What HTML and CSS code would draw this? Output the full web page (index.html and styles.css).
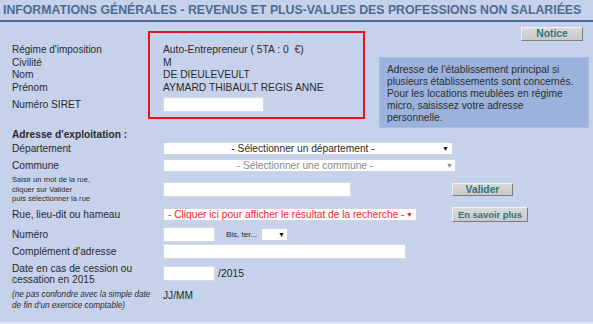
FILE: index.html
```html
<!DOCTYPE html>
<html lang="fr">
<head>
<meta charset="utf-8">
<title>Informations générales</title>
<link rel="stylesheet" href="styles.css">
</head>
<body>
<div class="page">
  <h1 class="title">INFORMATIONS GÉNÉRALES - REVENUS ET PLUS-VALUES DES PROFESSIONS NON SALARIÉES</h1>

  <div class="top">
    <div class="labels">
      <div class="line">Régime d'imposition</div>
      <div class="line">Civilité</div>
      <div class="line">Nom</div>
      <div class="line">Prénom</div>
      <div class="line siret-label">Numéro SIRET</div>
    </div>
    <div class="redbox">
      <div class="line">Auto-Entrepreneur ( 5TA : 0&nbsp; €)</div>
      <div class="line">M</div>
      <div class="line">DE DIEULEVEULT</div>
      <div class="line">AYMARD THIBAULT REGIS ANNE</div>
      <div class="input siret"></div>
    </div>
    <div class="side">
      <div class="btn notice">Notice</div>
      <div class="info">Adresse de l'établissement principal si<br>plusieurs établissements sont concernés.<br>Pour les locations meublées en régime<br>micro, saisissez votre adresse<br>personnelle.</div>
    </div>
  </div>

  <div class="form">
    <div class="heading">Adresse d'exploitation :</div>

    <div class="row r-dept">
      <div class="label">Département</div>
      <div class="select dept"><span class="sel-text">- Sélectionner un département -</span><span class="arrow">▼</span></div>
    </div>

    <div class="row r-commune">
      <div class="label">Commune</div>
      <div class="select commune"><span class="sel-text">- Sélectionner une commune -</span><span class="arrow">▼</span></div>
    </div>

    <div class="row r-saisir">
      <div class="label small">Saisir un mot de la rue,<br>cliquer sur Valider<br>puis sélectionner la rue</div>
      <div class="field"><div class="input rue-input"></div></div>
      <div class="btn valider">Valider</div>
    </div>

    <div class="row r-rue">
      <div class="label">Rue, lieu-dit ou hameau</div>
      <div class="field"><div class="select rue"><span class="sel-text">- Cliquer ici pour afficher le résultat de la recherche -</span><span class="arrow">▼</span></div></div>
      <div class="btn savoir">En savoir plus</div>
    </div>

    <div class="row r-num">
      <div class="label">Numéro</div>
      <div class="input num"></div>
      <span class="bis">Bis, ter...</span>
      <div class="select bissel"><span class="sel-text"></span><span class="arrow">▼</span></div>
    </div>

    <div class="row r-comp">
      <div class="label">Complément d'adresse</div>
      <div class="input comp"></div>
    </div>

    <div class="row r-date">
      <div class="label two">Date en cas de cession ou<br>cessation en 2015</div>
      <div class="input date"></div>
      <span class="year">/2015</span>
    </div>

    <div class="row r-note">
      <div class="label note">(ne pas confondre avec la simple date<br>de fin d'un exercice comptable)</div>
      <span class="jjmm">JJ/MM</span>
    </div>
  </div>
</div>
</body>
</html>
```

FILE: styles.css
```css
html, body {
  margin: 0;
  padding: 0;
}
body {
  background: #e2e7f3;
  font-family: "Liberation Sans", Arial, sans-serif;
  color: #2b2b2b;
  font-size: 10.2px;
}
.page {
  width: 593px;
  height: 322px;
  background: #c6d1eb;
  overflow: hidden;
}
.title {
  margin: 0;
  padding: 1px 0 0 3px;
  font-size: 12.3px;
  line-height: 19px;
  font-weight: bold;
  color: #4d6b8e;
  border-bottom: 2px solid #4b6b98;
  white-space: nowrap;
}
.top {
  display: flex;
  align-items: flex-start;
}
.labels {
  width: 136px;
  padding: 22px 0 0 12px;
  box-sizing: content-box;
}
.line {
  line-height: 12.5px;
  height: 12.5px;
  white-space: nowrap;
}
.labels .line:first-child { font-size: 10px; }
.siret-label {
  margin-top: 3px;
  height: 15px;
  line-height: 15px;
}
.redbox {
  margin-top: 9px;
  width: 187px;
  border: 2px solid #e8141b;
  padding: 11px 13px 5px 13px;
  font-size: 10.3px;
}
.input {
  background: #fff;
  border: 1px solid #d6d9e0;
  box-sizing: border-box;
  height: 15px;
}
.siret {
  margin-top: 3px;
  width: 101px;
}
.side {
  margin-left: 14px;
  width: 210px;
  display: flex;
  flex-direction: column;
  align-items: flex-end;
}
.btn {
  box-sizing: border-box;
  background: linear-gradient(#dadada, #c9c9c9);
  border: 1px solid;
  border-color: #f2f2f2 #7d7d7d #7d7d7d #f2f2f2;
  color: #2f7678;
  font-weight: bold;
  font-size: 10.3px;
  text-align: center;
  white-space: nowrap;
}
.notice {
  margin-top: 5px;
  margin-right: 6px;
  width: 62px;
  height: 14px;
  line-height: 12px;
}
.info {
  align-self: stretch;
  margin-top: 16px;
  background: #9bb2dc;
  border: 1px solid #a9bde2;
  padding: 6px 4px 3px 7px;
  line-height: 12px;
  color: #2d2d2d;
  white-space: nowrap;
}
.form {
  padding-left: 12px;
  margin-top: 1px;
}
.heading {
  font-weight: bold;
  line-height: 12px;
  height: 12px;
}
.row {
  display: flex;
  align-items: center;
}
.label {
  width: 151px;
  flex: none;
  line-height: 12px;
  white-space: nowrap;
}
.label.small {
  font-size: 7.6px;
  line-height: 9.5px;
}
.label.two {
  line-height: 11px;
}
.label.note {
  font-size: 8.2px;
  line-height: 11px;
  font-style: italic;
}
.field {
  width: 289px;
  flex: none;
  display: flex;
}
.select {
  box-sizing: border-box;
  height: 13px;
  background: #fff;
  border: 1px solid #cfd3dc;
  display: flex;
  align-items: center;
  font-size: 10.2px;
  line-height: 11px;
}
.sel-text {
  flex: 1;
  text-align: center;
  white-space: nowrap;
  overflow: hidden;
}
.arrow {
  font-size: 7px;
  width: 10px;
  flex: none;
  text-align: left;
  color: #111;
}
.r-dept { margin-top: 1px; }
.dept { width: 290px; color: #2b2b2b; }
.r-commune { margin-top: 4px; }
.commune { width: 293px; color: #8a8a8a; }
.commune .arrow { color: #888; width: 9px; }
.r-saisir { margin-top: 3px; }
.rue-input { width: 188px; }
.valider {
  width: 61px;
  height: 13px;
  line-height: 11px;
}
.r-rue { margin-top: 3.5px; }
.rue {
  width: 254px;
  color: #f2232e;
  padding-left: 4px;
}
.rue .sel-text { text-align: left; }
.rue .arrow { color: #f2232e; width: 10px; }
.savoir {
  width: 76px;
  height: 15px;
  line-height: 13px;
  font-size: 9.4px;
}
.r-num { margin-top: 5px; }
.num { width: 52px; }
.bis {
  font-size: 8px;
  margin-left: 11px;
  width: 35px;
}
.bissel {
  width: 27px;
  height: 13px;
}
.bissel .arrow { width: 9px; }
.r-comp { margin-top: 2px; }
.comp { width: 243px; }
.r-date { margin-top: 3.5px; }
.date { width: 52px; }
.year {
  margin-left: 3px;
  font-size: 10.4px;
}
.r-note {
  margin-top: 4px;
  align-items: flex-start;
}
.jjmm {
  margin-top: 1px;
  line-height: 12px;
}
```
